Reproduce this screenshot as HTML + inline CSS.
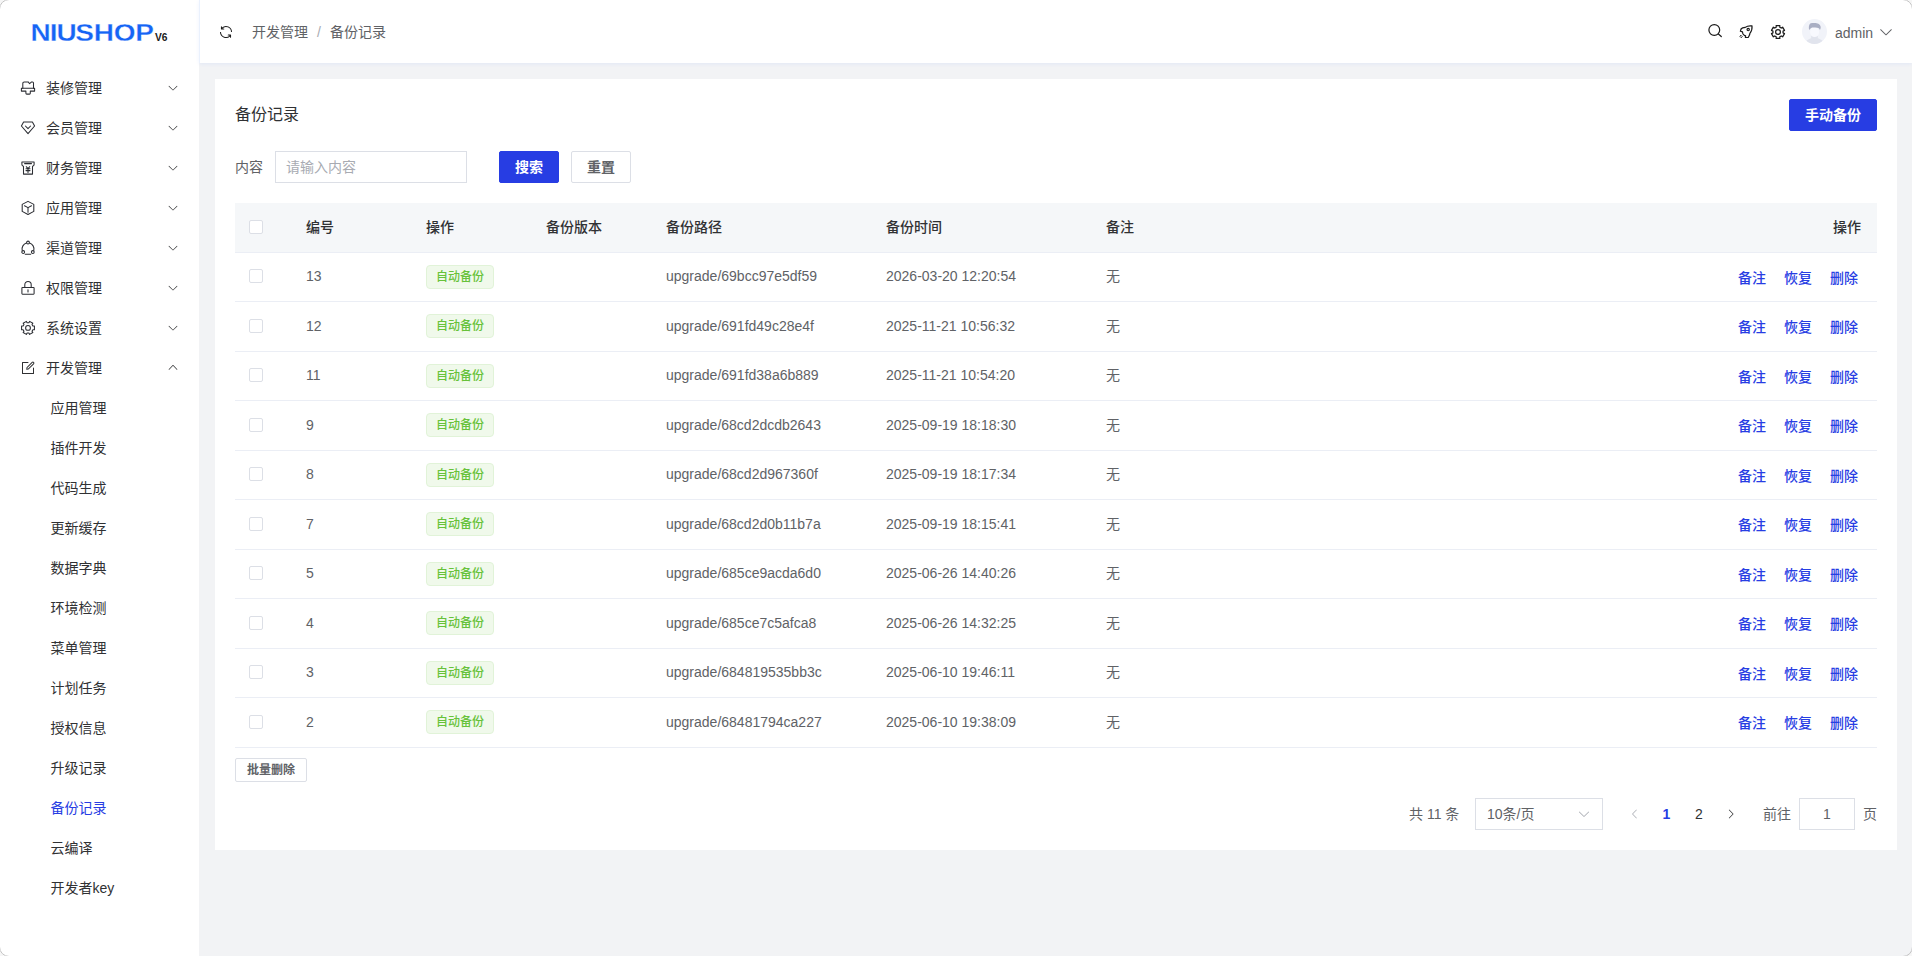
<!DOCTYPE html>
<html lang="zh-CN">
<head>
<meta charset="utf-8">
<title>备份记录</title>
<style>
*{box-sizing:border-box;margin:0;padding:0}
html,body{width:1912px;height:956px;overflow:hidden}
body{background:#f2f3f5;font-family:"Liberation Sans","Noto Sans CJK SC",sans-serif;font-size:14px;color:#606266;position:relative}
svg{display:block;overflow:visible}
.abs{position:absolute}
#side{position:absolute;left:0;top:0;width:199px;height:956px;background:#fff}
#logo{position:absolute;left:0;top:0;width:199px;height:64px}
.mi{position:absolute;left:0;width:199px;height:40px;line-height:40px;color:#303133;font-size:14px;white-space:nowrap}
.mi .ic{position:absolute;left:20px;top:12px;width:16px;height:16px}
.mi .tx{position:absolute;left:46px;top:0}
.mi .ar{position:absolute;left:167px;top:14px;width:12px;height:12px}
.si{position:absolute;left:50.5px;height:40px;line-height:40px;color:#303133;font-size:14px;white-space:nowrap}
.si.on{color:#273de3}
#head{position:absolute;left:199px;top:0;width:1713px;height:63px;background:#fff;border-left:1px solid #eaf1fd;box-shadow:0 1px 4px rgba(0,80,255,.072)}
#head .bc{position:absolute;top:1px;height:63px;line-height:63px;font-size:14px;color:#606266;white-space:nowrap}
#head .hi{position:absolute}
#card{position:absolute;left:215px;top:79px;width:1682px;height:771px;background:#fff}
.title{position:absolute;left:20px;top:21px;height:32px;line-height:30px;font-size:16px;color:#303133;white-space:nowrap}
.btn{position:absolute;height:32px;line-height:30px;border:1px solid #dcdfe6;border-radius:2px;background:#fff;color:#606266;font-size:14px;font-weight:700;text-align:center;white-space:nowrap}
.btn.pri{background:#273de3;border-color:#273de3;color:#fff}
.inp{position:absolute;height:32px;border:1px solid #dcdfe6;background:#fff;line-height:30px;font-size:14px;color:#a8abb2;white-space:nowrap}
#tb{position:absolute;left:20px;top:124px;width:1642px}
.tr{position:relative;height:49.5px;border-bottom:1px solid #ebeef5;width:1642px}
.tr.th{background:#f5f7f9;color:#303133;font-weight:500}
.td{position:absolute;top:-0.25px;height:48.5px;line-height:48.5px;white-space:nowrap;font-size:14px}
.cb{position:absolute;left:14px;top:16.75px;width:14px;height:14px;border:1px solid #dcdfe6;border-radius:2px;background:#fff}
.tag{position:absolute;left:191px;top:12.25px;width:68px;height:24px;line-height:22px;border:1px solid #e1f3d8;background:#f0f9eb;color:#67c23a;border-radius:4px;font-size:12px;font-weight:500;text-align:center;white-space:nowrap}
.lk{position:absolute;top:1.25px;height:48.5px;line-height:48.5px;color:#273de3;font-weight:500;font-size:14px;white-space:nowrap}
.c1{left:71px}.c2{left:191px}.c3{left:311px}.c4{left:431px}.c5{left:651px}.c6{left:871px}.c7{right:16px}
.l1{left:1503px}.l2{left:1549px}.l3{left:1595px}
.pg{position:absolute;top:719px;height:32px;line-height:32px;font-size:14px;color:#606266;white-space:nowrap}

.mi .ar.up{top:13.4px}
#frame{position:absolute;left:-1px;top:-1px;width:1914px;height:958px;border:1px solid #c2c2c2;border-radius:10.2px;box-shadow:0 0 0 8px #f6f6f6;pointer-events:none;z-index:99}
.tr.th .td{top:0}
.tr.th .cb{top:17px}
button{font-family:inherit;padding:0;margin:0;cursor:pointer;outline:0}
h3{font-weight:400}

</style>
</head>
<body>

<aside id="side">
  <div id="logo">
    <svg width="199" height="64" viewBox="0 0 199 64">
      <text transform="translate(0,40.9) scale(1.13,1)" x="27.05 43.93 50.11 66.66 83.03 100.7 119.8" y="0" font-family="Liberation Sans, sans-serif" font-weight="700" font-size="24.8" fill="#1664f5" stroke="#fff" stroke-width="0.3">NIUSHOP</text>
      <text x="155" y="40.6" font-family="Liberation Sans, sans-serif" font-weight="700" font-size="10" fill="#1a1a1a" textLength="12.5" lengthAdjust="spacingAndGlyphs">V6</text>
    </svg>
  </div>
  <nav id="menu">
  <div class="mi" style="top:68px"><span class="ic"><svg width="16" height="16" viewBox="0 0 16 16" ><g fill="none" stroke="#2b2d33" stroke-width="1.05" stroke-linejoin="round" stroke-linecap="round"><path d="M2.8 8.2V3.4Q2.8 1.9 4.3 1.9H8.2L9.6 3.7 11.6 1.9H12.6Q13.5 1.9 13.5 2.9V8.2"/><path d="M1.4 8.3H14.6V11.1H10.3V13.3Q10.3 14.1 9.5 14.1H6.7Q5.9 14.1 5.9 13.3V11.1H1.4Z"/></g></svg></span><span class="tx">装修管理</span><span class="ar"><svg width="12" height="12" viewBox="0 0 1024 1024"><path fill="#303133" d="M831.872 340.864 512 652.672 192.128 340.864a30.592 30.592 0 0 0-42.752 0 29.12 29.12 0 0 0 0 41.6L489.664 714.24a32 32 0 0 0 44.672 0l340.288-331.712a29.12 29.12 0 0 0 0-41.728 30.592 30.592 0 0 0-42.752 0z"/></svg></span></div>
  <div class="mi" style="top:108px"><span class="ic"><svg width="16" height="16" viewBox="0 0 16 16" ><g fill="none" stroke="#2b2d33" stroke-width="1.05" stroke-linejoin="round" stroke-linecap="round"><path d="M3.6 2H12.4L14.6 6 8 13.6 1.4 6Z"/><path d="M5.4 6 8 8.6 10.6 6"/></g></svg></span><span class="tx">会员管理</span><span class="ar"><svg width="12" height="12" viewBox="0 0 1024 1024"><path fill="#303133" d="M831.872 340.864 512 652.672 192.128 340.864a30.592 30.592 0 0 0-42.752 0 29.12 29.12 0 0 0 0 41.6L489.664 714.24a32 32 0 0 0 44.672 0l340.288-331.712a29.12 29.12 0 0 0 0-41.728 30.592 30.592 0 0 0-42.752 0z"/></svg></span></div>
  <div class="mi" style="top:148px"><span class="ic"><svg width="16" height="16" viewBox="0 0 16 16" ><g fill="none" stroke="#2b2d33" stroke-width="1.05" stroke-linejoin="round" stroke-linecap="round"><path d="M1.9 1.9H14.1V4.6Q14.1 6 12.5 6.2V14.1H3.5V6.2Q1.9 6 1.9 4.6Z"/><path d="M4.6 3.6H11.5"/><path d="M6.3 6.7 8 8.7 9.7 6.7M6 8.8H10M6 10.6H10M8 8.8V12.5"/></g></svg></span><span class="tx">财务管理</span><span class="ar"><svg width="12" height="12" viewBox="0 0 1024 1024"><path fill="#303133" d="M831.872 340.864 512 652.672 192.128 340.864a30.592 30.592 0 0 0-42.752 0 29.12 29.12 0 0 0 0 41.6L489.664 714.24a32 32 0 0 0 44.672 0l340.288-331.712a29.12 29.12 0 0 0 0-41.728 30.592 30.592 0 0 0-42.752 0z"/></svg></span></div>
  <div class="mi" style="top:188px"><span class="ic"><svg width="16" height="16" viewBox="0 0 16 16" ><g fill="none" stroke="#2b2d33" stroke-width="1.05" stroke-linejoin="round" stroke-linecap="round"><path d="M8 1.4 13.8 4.4V11.4L8 14.5 2.2 11.4V4.4Z"/><path d="M4.5 5.8 8 7.6 11.5 5.8M8 7.6V12.2"/></g></svg></span><span class="tx">应用管理</span><span class="ar"><svg width="12" height="12" viewBox="0 0 1024 1024"><path fill="#303133" d="M831.872 340.864 512 652.672 192.128 340.864a30.592 30.592 0 0 0-42.752 0 29.12 29.12 0 0 0 0 41.6L489.664 714.24a32 32 0 0 0 44.672 0l340.288-331.712a29.12 29.12 0 0 0 0-41.728 30.592 30.592 0 0 0-42.752 0z"/></svg></span></div>
  <div class="mi" style="top:228px"><span class="ic"><svg width="16" height="16" viewBox="0 0 16 16" ><g fill="none" stroke="#2b2d33" stroke-width="1.05" stroke-linejoin="round" stroke-linecap="round"><circle cx="8" cy="2.5" r="1.4"/><circle cx="3.2" cy="12" r="1.4"/><circle cx="12.8" cy="12" r="1.4"/><path d="M6.4 3.1A6.1 6.1 0 0 0 2.2 10.3"/><path d="M9.6 3.1A6.1 6.1 0 0 1 13.8 10.3"/><path d="M5.3 14.3H10.7"/></g></svg></span><span class="tx">渠道管理</span><span class="ar"><svg width="12" height="12" viewBox="0 0 1024 1024"><path fill="#303133" d="M831.872 340.864 512 652.672 192.128 340.864a30.592 30.592 0 0 0-42.752 0 29.12 29.12 0 0 0 0 41.6L489.664 714.24a32 32 0 0 0 44.672 0l340.288-331.712a29.12 29.12 0 0 0 0-41.728 30.592 30.592 0 0 0-42.752 0z"/></svg></span></div>
  <div class="mi" style="top:268px"><span class="ic"><svg width="16" height="16" viewBox="0 0 16 16" ><g fill="none" stroke="#2b2d33" stroke-width="1.05" stroke-linejoin="round" stroke-linecap="round"><rect x="1.9" y="7.5" width="12.2" height="6.7" rx="0.6"/><path d="M4.8 7.5V4.7a3.2 3.2 0 0 1 6.4 0V7.5"/><path d="M8 9.7V12"/></g></svg></span><span class="tx">权限管理</span><span class="ar"><svg width="12" height="12" viewBox="0 0 1024 1024"><path fill="#303133" d="M831.872 340.864 512 652.672 192.128 340.864a30.592 30.592 0 0 0-42.752 0 29.12 29.12 0 0 0 0 41.6L489.664 714.24a32 32 0 0 0 44.672 0l340.288-331.712a29.12 29.12 0 0 0 0-41.728 30.592 30.592 0 0 0-42.752 0z"/></svg></span></div>
  <div class="mi" style="top:308px"><span class="ic"><svg width="16" height="16" viewBox="0 0 16 16" ><g fill="none" stroke="#2b2d33" stroke-width="1.05" stroke-linejoin="round" stroke-linecap="round"><path d="M14.43 6.03 L14.43 9.77 L12.87 9.71 L12.01 11.21 L12.84 12.54 L9.60 14.41 L8.87 13.03 L7.13 13.03 L6.40 14.41 L3.16 12.54 L3.99 11.21 L3.13 9.71 L1.57 9.77 L1.57 6.03 L3.13 6.09 L3.99 4.59 L3.16 3.26 L6.40 1.39 L7.13 2.77 L8.87 2.77 L9.60 1.39 L12.84 3.26 L12.01 4.59 L12.87 6.09Z" stroke-linejoin="round"/><circle cx="8" cy="7.9" r="2.4"/></g></svg></span><span class="tx">系统设置</span><span class="ar"><svg width="12" height="12" viewBox="0 0 1024 1024"><path fill="#303133" d="M831.872 340.864 512 652.672 192.128 340.864a30.592 30.592 0 0 0-42.752 0 29.12 29.12 0 0 0 0 41.6L489.664 714.24a32 32 0 0 0 44.672 0l340.288-331.712a29.12 29.12 0 0 0 0-41.728 30.592 30.592 0 0 0-42.752 0z"/></svg></span></div>
  <div class="mi" style="top:348px"><span class="ic"><svg width="16" height="16" viewBox="0 0 1024 1024" ><path fill="#303133" d="M832 512a32 32 0 1 1 64 0v352a32 32 0 0 1-32 32H160a32 32 0 0 1-32-32V160a32 32 0 0 1 32-32h352a32 32 0 0 1 0 64H192v640h640z"/><path fill="#303133" d="m469.952 554.24 52.8-7.552L847.104 222.4a32 32 0 1 0-45.248-45.248L477.44 501.44l-7.552 52.8zm422.4-422.4a96 96 0 0 1 0 135.808l-331.84 331.84a32 32 0 0 1-18.112 9.088L436.8 623.68a32 32 0 0 1-36.224-36.224l15.104-105.6a32 32 0 0 1 9.024-18.112l331.904-331.84a96 96 0 0 1 135.744 0z"/></svg></span><span class="tx">开发管理</span><span class="ar up"><svg width="12" height="12" viewBox="0 0 1024 1024"><path fill="#303133" d="m488.832 344.32-339.84 356.672a32 32 0 0 0 0 44.16l.384.384a29.44 29.44 0 0 0 42.688 0l320-335.872 319.872 335.872a29.44 29.44 0 0 0 42.688 0l.384-.384a32 32 0 0 0 0-44.16L535.168 344.32a32 32 0 0 0-46.336 0"/></svg></span></div>
  <div class="si" style="top:388px">应用管理</div>
  <div class="si" style="top:428px">插件开发</div>
  <div class="si" style="top:468px">代码生成</div>
  <div class="si" style="top:508px">更新缓存</div>
  <div class="si" style="top:548px">数据字典</div>
  <div class="si" style="top:588px">环境检测</div>
  <div class="si" style="top:628px">菜单管理</div>
  <div class="si" style="top:668px">计划任务</div>
  <div class="si" style="top:708px">授权信息</div>
  <div class="si" style="top:748px">升级记录</div>
  <div class="si on" style="top:788px">备份记录</div>
  <div class="si" style="top:828px">云编译</div>
  <div class="si" style="top:868px">开发者key</div>
  </nav>
</aside>

<header id="head">
  <div class="hi" style="left:18.4px;top:24px"><svg width="16" height="16" viewBox="0 0 1024 1024"><path fill="#1a1a1a" d="M771.776 794.88A384 384 0 0 1 128 512h64a320 320 0 0 0 555.712 216.448H654.72a32 32 0 1 1 0-64h149.056a32 32 0 0 1 32 32v148.928a32 32 0 1 1-64 0v-50.56zM276.288 295.616h92.992a32 32 0 0 1 0 64H220.16a32 32 0 0 1-32-32V178.56a32 32 0 0 1 64 0v50.56A384 384 0 0 1 896 512h-64a320 320 0 0 0-555.712-216.384z"/></svg></div>
  <div class="bc" style="left:52px">开发管理</div>
  <div class="bc" style="left:117px;color:#a8abb2">/</div>
  <div class="bc" style="left:130px">备份记录</div>
  <div class="hi" style="left:1507px;top:23px"><svg width="16" height="16" viewBox="0 0 16 16" ><g fill="none" stroke="#1a1a1a" stroke-width="1.2" stroke-linejoin="round" stroke-linecap="round"><circle cx="7.3" cy="7.0" r="5.4"/><path d="M11.4 11.0 14.3 13.5"/></g></svg></div>
  <div class="hi" style="left:1538px;top:24px"><svg width="16" height="16" viewBox="0 0 16 16" ><g fill="none" stroke="#1a1a1a" stroke-width="1.2" stroke-linejoin="round" stroke-linecap="round"><path d="M14 1.9C11.4 1.6 9 2 7.3 3.4L4.6 3.9Q2.6 4.6 2.4 7.2L4.5 7.9Q4.4 10.4 6.4 11.4L7.6 11.9 7.4 13.5H10.2L11 12Q11.8 10.6 11.9 9.4C13.6 7.4 14.3 4.9 14 1.9Z"/><circle cx="10.2" cy="5.6" r="1.15"/><path d="M3.2 11.5 4.3 12.6 3.2 13.7 2.1 12.6Z" stroke-width="0.9"/></g></svg></div>
  <div class="hi" style="left:1570px;top:24px"><svg width="16" height="16" viewBox="0 0 16 16" ><g fill="none" stroke="#1a1a1a" stroke-width="1.2" stroke-linejoin="round" stroke-linecap="round"><path d="M6.13 1.57 L9.87 1.57 L9.78 3.22 L11.25 4.07 L12.64 3.16 L14.51 6.40 L13.03 7.15 L13.03 8.85 L14.51 9.60 L12.64 12.84 L11.25 11.93 L9.78 12.78 L9.87 14.43 L6.13 14.43 L6.22 12.78 L4.75 11.93 L3.36 12.84 L1.49 9.60 L2.97 8.85 L2.97 7.15 L1.49 6.40 L3.36 3.16 L4.75 4.07 L6.22 3.22Z"/><circle cx="8" cy="8" r="2.4"/></g></svg></div>
  <div class="hi" style="left:1602px;top:19px;width:25px;height:25px;border-radius:50%;background:#f1f3f9;overflow:hidden">
    <svg width="25" height="25" viewBox="0 0 25 25"><path d="M3.2 25C3.4 21.6 7 19.7 9.2 19.2V16.4H15.8V19.2C18 19.7 21.6 21.6 21.8 25Z" fill="#e1e4ed"/><ellipse cx="12.6" cy="13.1" rx="4.5" ry="5" fill="#f8f9fe"/><path d="M7.1 11C6.6 8.2 6.8 5.7 8.2 4.5 10 3.9 13 3.9 14.7 4.3 17.1 4.7 18.9 6.4 18.7 8.4 18.6 9.6 18.3 10.4 17.9 11.1 17.5 9.5 16.5 8.7 15.2 8.7 13 8.7 10.7 8.3 9.6 8.7 8.6 9.2 7.8 10.1 7.1 11Z" fill="#a9aec3"/></svg>
  </div>
  <div class="bc" style="left:1635px;top:2px">admin</div>
  <div class="hi" style="left:1678px;top:24px"><svg width="16" height="16" viewBox="0 0 1024 1024"><path fill="#606266" d="M831.872 340.864 512 652.672 192.128 340.864a30.592 30.592 0 0 0-42.752 0 29.12 29.12 0 0 0 0 41.6L489.664 714.24a32 32 0 0 0 44.672 0l340.288-331.712a29.12 29.12 0 0 0 0-41.728 30.592 30.592 0 0 0-42.752 0z"/></svg></div>
</header>

<main id="card">
  <h3 class="title">备份记录</h3>
  <button type="button" class="btn pri" style="left:1574px;top:20px;width:88px">手动备份</button>

  <div class="abs" style="left:20px;top:72px;height:32px;line-height:32px;font-size:14px;color:#606266;white-space:nowrap">内容</div>
  <div class="inp" style="left:60px;top:72px;width:192px;padding-left:10px">请输入内容</div>
  <button type="button" class="btn pri" style="left:284px;top:72px;width:60px">搜索</button>
  <button type="button" class="btn" style="left:356px;top:72px;width:60px">重置</button>

  <div id="tb">
    <div class="tr th"><span class="cb"></span><span class="td c1">编号</span><span class="td c2">操作</span><span class="td c3">备份版本</span><span class="td c4">备份路径</span><span class="td c5">备份时间</span><span class="td c6">备注</span><span class="td c7">操作</span></div>
    <div class="tr"><span class="cb"></span><span class="td c1">13</span><span class="tag">自动备份</span><span class="td c4">upgrade/69bcc97e5df59</span><span class="td c5">2026-03-20 12:20:54</span><span class="td c6">无</span><a class="lk l1">备注</a><a class="lk l2">恢复</a><a class="lk l3">删除</a></div>
    <div class="tr"><span class="cb"></span><span class="td c1">12</span><span class="tag">自动备份</span><span class="td c4">upgrade/691fd49c28e4f</span><span class="td c5">2025-11-21 10:56:32</span><span class="td c6">无</span><a class="lk l1">备注</a><a class="lk l2">恢复</a><a class="lk l3">删除</a></div>
    <div class="tr"><span class="cb"></span><span class="td c1">11</span><span class="tag">自动备份</span><span class="td c4">upgrade/691fd38a6b889</span><span class="td c5">2025-11-21 10:54:20</span><span class="td c6">无</span><a class="lk l1">备注</a><a class="lk l2">恢复</a><a class="lk l3">删除</a></div>
    <div class="tr"><span class="cb"></span><span class="td c1">9</span><span class="tag">自动备份</span><span class="td c4">upgrade/68cd2dcdb2643</span><span class="td c5">2025-09-19 18:18:30</span><span class="td c6">无</span><a class="lk l1">备注</a><a class="lk l2">恢复</a><a class="lk l3">删除</a></div>
    <div class="tr"><span class="cb"></span><span class="td c1">8</span><span class="tag">自动备份</span><span class="td c4">upgrade/68cd2d967360f</span><span class="td c5">2025-09-19 18:17:34</span><span class="td c6">无</span><a class="lk l1">备注</a><a class="lk l2">恢复</a><a class="lk l3">删除</a></div>
    <div class="tr"><span class="cb"></span><span class="td c1">7</span><span class="tag">自动备份</span><span class="td c4">upgrade/68cd2d0b11b7a</span><span class="td c5">2025-09-19 18:15:41</span><span class="td c6">无</span><a class="lk l1">备注</a><a class="lk l2">恢复</a><a class="lk l3">删除</a></div>
    <div class="tr"><span class="cb"></span><span class="td c1">5</span><span class="tag">自动备份</span><span class="td c4">upgrade/685ce9acda6d0</span><span class="td c5">2025-06-26 14:40:26</span><span class="td c6">无</span><a class="lk l1">备注</a><a class="lk l2">恢复</a><a class="lk l3">删除</a></div>
    <div class="tr"><span class="cb"></span><span class="td c1">4</span><span class="tag">自动备份</span><span class="td c4">upgrade/685ce7c5afca8</span><span class="td c5">2025-06-26 14:32:25</span><span class="td c6">无</span><a class="lk l1">备注</a><a class="lk l2">恢复</a><a class="lk l3">删除</a></div>
    <div class="tr"><span class="cb"></span><span class="td c1">3</span><span class="tag">自动备份</span><span class="td c4">upgrade/684819535bb3c</span><span class="td c5">2025-06-10 19:46:11</span><span class="td c6">无</span><a class="lk l1">备注</a><a class="lk l2">恢复</a><a class="lk l3">删除</a></div>
    <div class="tr"><span class="cb"></span><span class="td c1">2</span><span class="tag">自动备份</span><span class="td c4">upgrade/68481794ca227</span><span class="td c5">2025-06-10 19:38:09</span><span class="td c6">无</span><a class="lk l1">备注</a><a class="lk l2">恢复</a><a class="lk l3">删除</a></div>
  </div>

  <button type="button" class="btn" style="left:20px;top:679px;width:72px;height:24px;line-height:22px;font-size:12px;font-weight:700">批量删除</button>

  <div class="pg" style="left:1194px">共 11 条</div>
  <div class="inp" style="left:1260px;top:719px;width:128px;padding-left:11px;color:#606266">10条/页</div>
  <div class="abs" style="left:1362px;top:727.5px"><svg width="14" height="14" viewBox="0 0 1024 1024"><path fill="#a8abb2" d="M831.872 340.864 512 652.672 192.128 340.864a30.592 30.592 0 0 0-42.752 0 29.12 29.12 0 0 0 0 41.6L489.664 714.24a32 32 0 0 0 44.672 0l340.288-331.712a29.12 29.12 0 0 0 0-41.728 30.592 30.592 0 0 0-42.752 0z"/></svg></div>
  <div class="abs" style="left:1414px;top:729px"><svg width="12" height="12" viewBox="0 0 1024 1024"><path fill="#a8abb2" d="M609.408 149.376 277.76 489.6a32 32 0 0 0 0 44.672l331.648 340.352a29.12 29.12 0 0 0 41.728 0 30.592 30.592 0 0 0 0-42.752L339.264 511.936l311.872-319.872a30.592 30.592 0 0 0 0-42.688 29.12 29.12 0 0 0-41.728 0z"/></svg></div>
  <div class="pg" style="left:1447.6px;color:#273de3;font-weight:700">1</div>
  <div class="pg" style="left:1480px;color:#303133">2</div>
  <div class="abs" style="left:1510px;top:729px"><svg width="12" height="12" viewBox="0 0 1024 1024"><path fill="#303133" d="M340.864 149.312a30.592 30.592 0 0 0 0 42.752L652.736 512 340.864 831.872a30.592 30.592 0 0 0 0 42.752 29.12 29.12 0 0 0 41.728 0L714.24 534.336a32 32 0 0 0 0-44.672L382.592 149.376a29.12 29.12 0 0 0-41.728 0z"/></svg></div>
  <div class="pg" style="left:1548px">前往</div>
  <div class="inp" style="left:1584px;top:719px;width:56px;text-align:center;color:#606266">1</div>
  <div class="pg" style="left:1648px">页</div>
</main>

<div id="frame"></div>
</body>
</html>
